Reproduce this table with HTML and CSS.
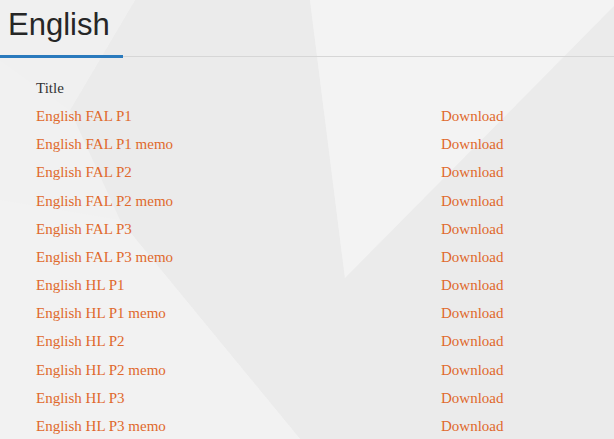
FILE: index.html
```html
<!DOCTYPE html>
<html lang="en">
<head>
<meta charset="utf-8">
<title>English</title>
<link rel="stylesheet" href="styles.css">
</head>
<body>
<svg class="bg" width="614" height="439" viewBox="0 0 614 439" aria-hidden="true">
  <rect x="0" y="0" width="614" height="439" fill="#f1f1f1"/>
  <polygon points="135,0 310,0 345,278 345,439 300,439 120,220 70,110" fill="#ebebeb"/>
  <polygon points="0,0 135,0 70,110 0,60" fill="#f0f0f0"/>
  <polygon points="310,0 614,0 614,6 345,278" fill="#f3f3f3"/>
  <polygon points="614,6 614,439 345,439 345,278" fill="#ebebeb"/>
  <polygon points="0,200 120,220 300,439 0,439" fill="#f2f2f2"/>
</svg>
<div class="page">
  <div class="header">
    <h1 class="title">English</h1>
  </div>
  <div class="list">
    <div class="head">Title</div><div class="head"></div>
    <a class="link" href="#">English FAL P1</a><a class="link" href="#">Download</a>
    <a class="link" href="#">English FAL P1 memo</a><a class="link" href="#">Download</a>
    <a class="link" href="#">English FAL P2</a><a class="link" href="#">Download</a>
    <a class="link" href="#">English FAL P2 memo</a><a class="link" href="#">Download</a>
    <a class="link" href="#">English FAL P3</a><a class="link" href="#">Download</a>
    <a class="link" href="#">English FAL P3 memo</a><a class="link" href="#">Download</a>
    <a class="link" href="#">English HL P1</a><a class="link" href="#">Download</a>
    <a class="link" href="#">English HL P1 memo</a><a class="link" href="#">Download</a>
    <a class="link" href="#">English HL P2</a><a class="link" href="#">Download</a>
    <a class="link" href="#">English HL P2 memo</a><a class="link" href="#">Download</a>
    <a class="link" href="#">English HL P3</a><a class="link" href="#">Download</a>
    <a class="link" href="#">English HL P3 memo</a><a class="link" href="#">Download</a>
  </div>
</div>
</body>
</html>
```
FILE: styles.css
```css
html, body {
  margin: 0;
  padding: 0;
}
body {
  width: 614px;
  height: 439px;
  overflow: hidden;
  position: relative;
  background: #f1f1f1;
  font-family: "Liberation Serif", "Times New Roman", serif;
  font-size: 15px;
}
.bg {
  position: absolute;
  left: 0;
  top: 0;
  z-index: 0;
  display: block;
}
.page {
  position: relative;
  z-index: 1;
}
.header {
  border-bottom: 1px solid #d6d6d6;
}
.title {
  margin: 0 0 -2px 0;
  width: 123px;
  box-sizing: border-box;
  padding: 7px 0 13px 8px;
  line-height: 35px;
  font-family: "Liberation Sans", Arial, sans-serif;
  font-size: 31px;
  font-weight: normal;
  color: #262626;
  border-bottom: 3px solid #2a7abd;
}
.list {
  margin-top: 17px;
  padding-left: 36px;
  display: grid;
  grid-template-columns: 405px auto;
  grid-template-rows: 28px;
  grid-auto-rows: 28.18px;
  align-items: start;
}
.head, .link {
  padding-top: 6px;
  line-height: 16px;
  display: block;
}
.head {
  color: #333333;
}
.link {
  color: #e0692c;
  text-decoration: none;
  justify-self: start;
}
```
